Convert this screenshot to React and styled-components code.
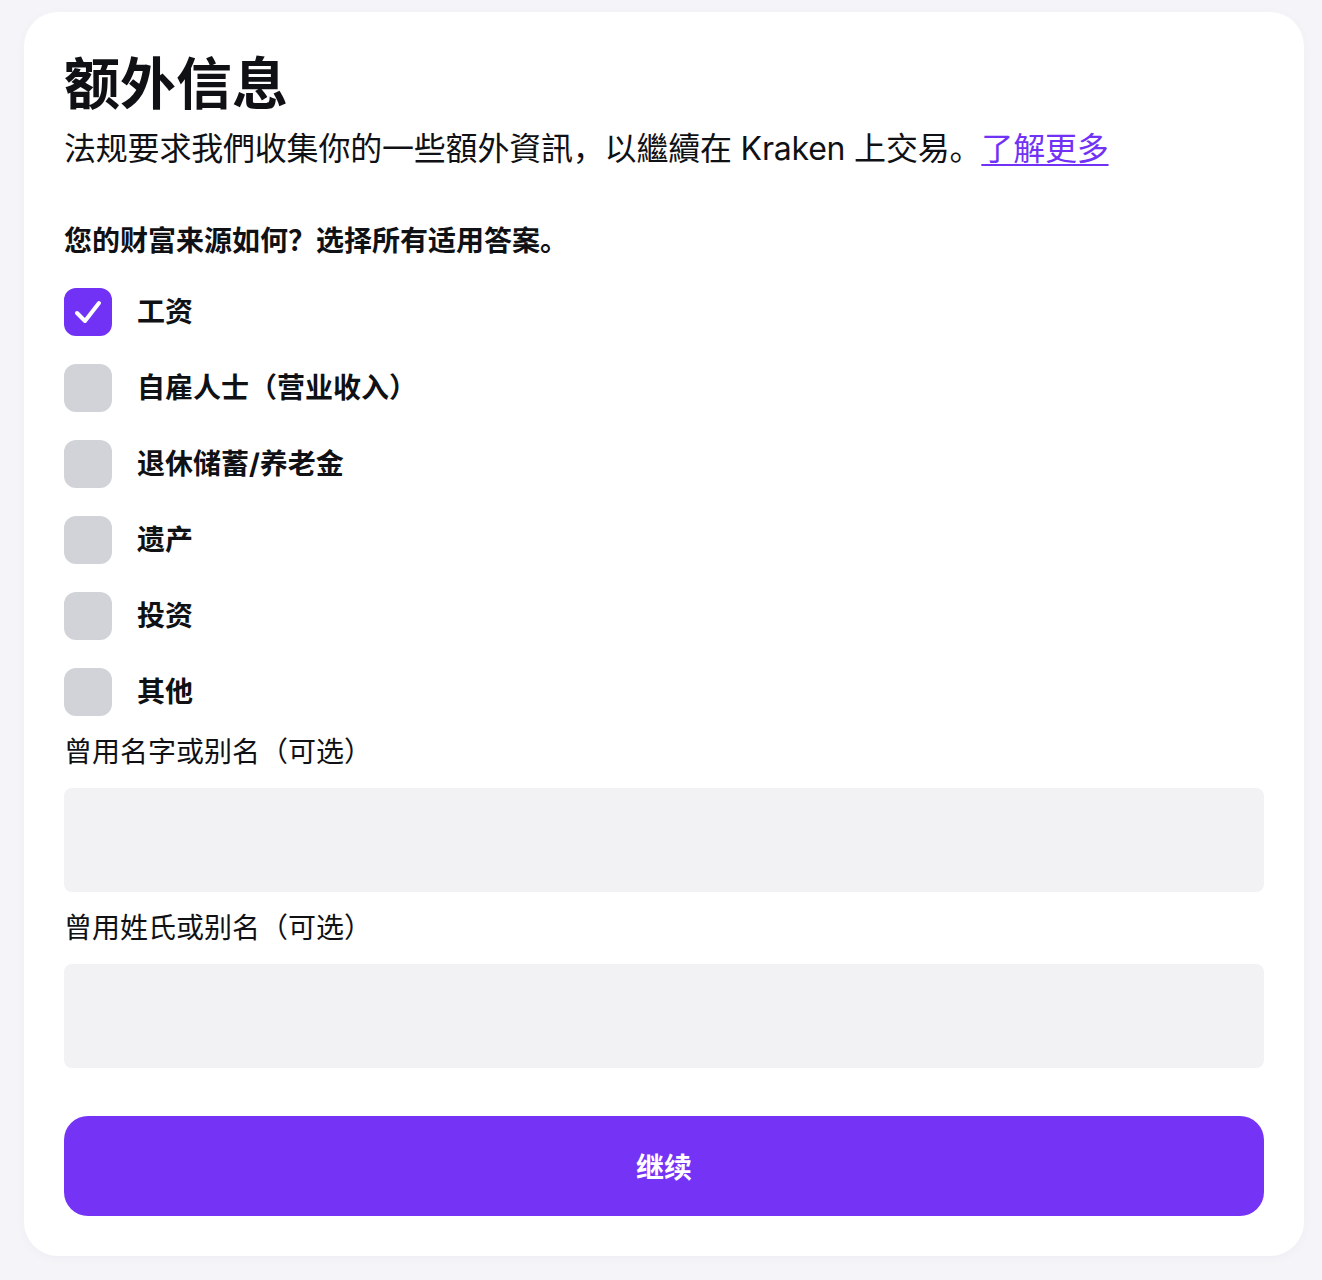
import React, { useState } from "react";
import styled, { createGlobalStyle } from "styled-components";

const GlobalStyle = createGlobalStyle`
  html, body { margin: 0; padding: 0; background: #f5f5f9; }
  body {
    font-family: Inter, "Noto Sans CJK SC", "Noto Sans", sans-serif;
    color: #101114;
    -webkit-font-smoothing: antialiased;
  }
  * { box-sizing: border-box; }
`;

const Page = styled.div`
  padding: 12px 18px 24px 24px;
`;

const Card = styled.div`
  width: 1280px;
  background: #ffffff;
  border-radius: 34px;
  padding: 40px;
  box-shadow: 0 2px 10px rgba(40, 30, 90, 0.04);
  display: flex;
  flex-direction: column;
`;

const Title = styled.h1`
  margin: 0;
  font-size: 56px;
  line-height: 64px;
  font-weight: 700;
  letter-spacing: 0;
`;

const Subtitle = styled.p`
  margin: 13px 0 0;
  font-size: 32px;
  line-height: 40px;
  font-weight: 400;
  letter-spacing: -0.2px;
`;

const Link = styled.a`
  color: #7132f5;
  text-decoration: underline;
  text-underline-offset: 4px;
  text-decoration-thickness: 2px;
  cursor: pointer;
`;

const Question = styled.div`
  margin-top: 54px;
  font-size: 28px;
  line-height: 36px;
  font-weight: 700;
`;

const OptionList = styled.div`
  margin-top: 29px;
  display: flex;
  flex-direction: column;
  gap: 28px;
`;

const OptionRow = styled.label`
  display: flex;
  align-items: center;
  gap: 25px;
  cursor: pointer;
  font-size: 28px;
  line-height: 36px;
  font-weight: 700;
`;

const Box = styled.span`
  width: 48px;
  height: 48px;
  flex: none;
  border-radius: 12px;
  background: ${(p) => (p.$checked ? "#7132f5" : "#d2d3d8")};
  display: flex;
  align-items: center;
  justify-content: center;
`;

const Fields = styled.div`
  margin-top: 18px;
  display: flex;
  flex-direction: column;
  gap: 18px;
`;

const Field = styled.div`
  display: flex;
  flex-direction: column;
  gap: 18px;
`;

const FieldLabel = styled.label`
  font-size: 28px;
  line-height: 36px;
  font-weight: 400;
`;

const Input = styled.input`
  width: 100%;
  height: 104px;
  border: none;
  outline: none;
  border-radius: 8px;
  background: #f2f2f4;
  padding: 0 24px;
  font-size: 28px;
  font-family: inherit;
  color: #101114;
`;

const Button = styled.button`
  margin-top: 48px;
  height: 100px;
  width: 100%;
  border: none;
  border-radius: 24px;
  background: #7433f5;
  color: #ffffff;
  font-family: inherit;
  font-size: 28px;
  font-weight: 700;
  cursor: pointer;
`;

const Check = () => (
  <svg width="48" height="48" viewBox="0 0 48 48" fill="none">
    <polyline
      points="13,25 21,33 35,15"
      stroke="#ffffff"
      strokeWidth="4"
      strokeLinecap="round"
      strokeLinejoin="round"
    />
  </svg>
);

const options = ["工资", "自雇人士（营业收入）", "退休储蓄/养老金", "遗产", "投资", "其他"];

export default function App() {
  const [checked, setChecked] = useState({ 0: true });
  return (
    <>
      <GlobalStyle />
      <Page>
        <Card>
          <Title>额外信息</Title>
          <Subtitle>
            法规要求我們收集你的一些額外資訊，以繼續在 Kraken 上交易。<Link>了解更多</Link>
          </Subtitle>
          <Question>您的财富来源如何？选择所有适用答案。</Question>
          <OptionList>
            {options.map((o, i) => (
              <OptionRow key={o} onClick={() => setChecked((c) => ({ ...c, [i]: !c[i] }))}>
                <Box $checked={!!checked[i]}>{checked[i] && <Check />}</Box>
                {o}
              </OptionRow>
            ))}
          </OptionList>
          <Fields>
            <Field>
              <FieldLabel>曾用名字或别名（可选）</FieldLabel>
              <Input />
            </Field>
            <Field>
              <FieldLabel>曾用姓氏或别名（可选）</FieldLabel>
              <Input />
            </Field>
          </Fields>
          <Button>继续</Button>
        </Card>
      </Page>
    </>
  );
}
